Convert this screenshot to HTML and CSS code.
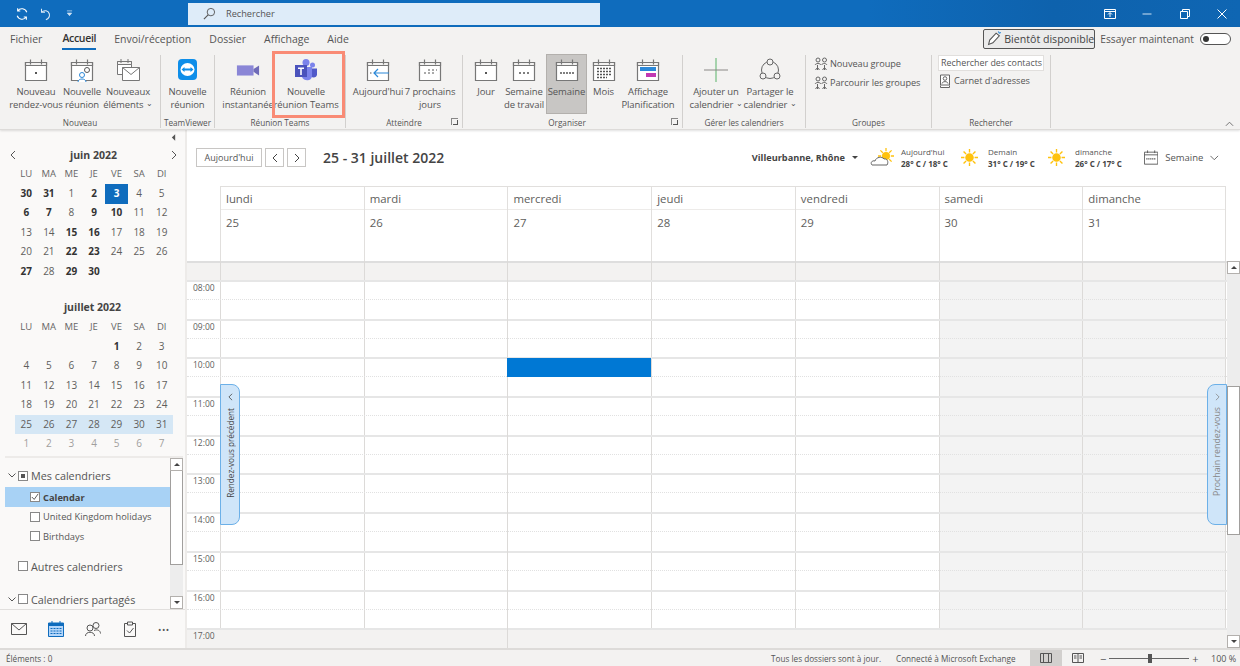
FILE: index.html
```html
<!doctype html>
<html lang="fr">
<head>
    <title>Calendrier - Outlook</title>
    <meta charset="utf-8">
    <link rel="stylesheet" href="styles.css">
</head>
<body>
    <svg class="defs" width="0" height="0">
      <symbol id="cal" viewBox="0 0 24 24">
        <path d="M1.5 4.5h21v18h-21z" fill="#fff" stroke="#777" stroke-width="1.2"/>
        <path d="M1.5 4.5h21v3h-21z" fill="#f3f2f1" stroke="#777" stroke-width="1.2"/>
        <path d="M6.5 1.5v5M17.5 1.5v5" stroke="#777" stroke-width="1.2"/>
      </symbol>
      <symbol id="people" viewBox="0 0 14 14">
        <g fill="none" stroke="#666" stroke-width="1">
          <circle cx="4" cy="3" r="2"/><circle cx="10.5" cy="3" r="2"/>
          <path d="M1 8c1-2 5-2 6 0M7.5 8c1-2 4.5-2 5.5 0M3.5 8v5M10.5 8v5M3.5 10.5l-2 2.5M3.5 10.5l2 2.5M10.5 10.5l-2 2.5M10.5 10.5l2 2.5"/>
        </g>
      </symbol>
      <symbol id="sun" viewBox="0 0 20 20">
        <circle cx="10" cy="10" r="5" fill="#ffc20e"/>
        <path d="M10 0v4M10 16v4M0 10h4M16 10h4M3 3l3 3M14 14l3 3M17 3l-3 3M6 14l-3 3" stroke="#ffc20e" stroke-width="1.6"/>
      </symbol>
    </svg>

    <header class="titlebar">
      <div class="qat">
        <svg class="qat-icon" viewBox="0 0 16 16"><path d="M13.5 6A6 6 0 0 0 3 4.5M2.5 10A6 6 0 0 0 13 11.5M3 1.5v3h3M13 14.5v-3h-3" fill="none" stroke="#fff" stroke-width="1.2"/></svg>
        <svg class="qat-icon" viewBox="0 0 16 16"><path d="M4 2v4h4M4 6c3-3 8-2 9 2 .6 3-1.5 5.5-4 6.5" fill="none" stroke="#dbe9f6" stroke-width="1.2"/></svg>
        <svg class="qat-caret" viewBox="0 0 8 8"><path d="M1 1h6M1.5 3.5L4 6.5l2.5-3z" fill="#cfe2f3" stroke="#cfe2f3" stroke-width=".8"/></svg>
      </div>
      <div class="search">
        <svg class="search-icon" viewBox="0 0 14 14"><circle cx="8.5" cy="5.5" r="4" fill="none" stroke="#555" stroke-width="1"/><path d="M5.5 8.5L1 13" stroke="#555" stroke-width="1.2"/></svg>
        <span>Rechercher</span>
      </div>
      <div class="win-btns">
        <svg class="win-icon" viewBox="0 0 12 12"><path d="M.5 1.5h11v9H.5zM.5 3.5h11M6 9V5M4 6.5L6 4.5l2 2" fill="none" stroke="#fff" stroke-width="1"/></svg>
        <svg class="win-icon" viewBox="0 0 12 12"><path d="M1.5 6h9" stroke="#cfe2f3" stroke-width="1"/></svg>
        <svg class="win-icon" viewBox="0 0 12 12"><path d="M1.5 3.5h7v7h-7zM3.5 3.5v-2h7v7h-2" fill="none" stroke="#fff" stroke-width="1"/></svg>
        <svg class="win-icon" viewBox="0 0 12 12"><path d="M1.5 1.5l9 9M10.5 1.5l-9 9" stroke="#fff" stroke-width="1"/></svg>
      </div>
    </header>

    <section class="ribbon">
      <div class="tabs">
        <nav class="tab-list">
          <span>Fichier</span>
          <span class="tab-active">Accueil</span>
          <span>Envoi/réception</span>
          <span>Dossier</span>
          <span>Affichage</span>
          <span>Aide</span>
        </nav>
        <div class="try">
          <div class="soon">
            <svg class="soon-icon" viewBox="0 0 14 14"><path d="M1.5 12.5l1-4 6-6.5 3 2.5-6 6.5z" fill="#fff" stroke="#555" stroke-width="1"/><path d="M10.5.5l1 1.5 1.5-.5" fill="none" stroke="#2b88d8" stroke-width="1"/></svg>
            <span>Bientôt disponible</span>
          </div>
          <span>Essayer maintenant</span>
          <span class="toggle"><i></i></span>
        </div>
      </div>

      <div class="groups">
        <div class="group g-new">
          <div class="items">
            <div class="item"><svg class="big-icon" viewBox="0 0 24 24"><use href="#cal"/><path d="M11 14h2v2h-2z" fill="#555"/></svg><span>Nouveau<br>rendez-vous</span></div>
            <div class="item"><svg class="big-icon" viewBox="0 0 24 24"><use href="#cal"/><circle cx="17" cy="12" r="2.5" fill="#fff" stroke="#555"/><circle cx="12" cy="17" r="2.5" fill="#fff" stroke="#2b88d8"/><path d="M8 24c0-4 8-4 8 0" fill="#fff" stroke="#2b88d8"/></svg><span>Nouvelle<br>réunion</span></div>
            <div class="item"><svg class="big-icon" viewBox="0 0 24 24"><path d="M1.5 3.5h14v13h-14z" fill="#fff" stroke="#777"/><path d="M1.5 3.5h14v3h-14zM5 1v4M12 1v4" fill="#f3f2f1" stroke="#777"/><path d="M6.5 9.5h17v13h-17z" fill="#fff" stroke="#777"/><path d="M6.5 9.5l8.5 7 8.5-7" fill="none" stroke="#777"/></svg><span>Nouveaux<br>éléments <b class="caret">⌄</b></span></div>
          </div>
          <div class="group-name">Nouveau</div>
        </div>

        <div class="group g-tv">
          <div class="items">
            <div class="item"><svg class="big-icon" viewBox="0 0 24 24"><rect x="2" y="1" width="19" height="21" rx="4" fill="#0e8ee9"/><ellipse cx="11.5" cy="11.5" rx="7" ry="6.5" fill="#fff"/><path d="M5.5 11.5l3-2.5v1.5h6V9l3 2.5-3 2.5v-1.5h-6V14z" fill="#0e8ee9"/></svg><span>Nouvelle<br>réunion</span></div>
          </div>
          <div class="group-name">TeamViewer</div>
        </div>

        <div class="group g-teams">
          <div class="items">
            <div class="item"><svg class="big-icon" viewBox="0 0 26 24"><path d="M1 7h18v11H1z" fill="#8a86d6"/><path d="M19 11l6-4v11l-6-4z" fill="#6f6bb8"/></svg><span>Réunion<br>instantanée</span></div>
            <div class="item"><svg class="big-icon" viewBox="0 0 24 24"><circle cx="18.5" cy="7" r="2.5" fill="#7b83eb"/><path d="M15 10.5h8v6c0 3-4 4-6 2z" fill="#5059c9"/><circle cx="12" cy="4.5" r="3.5" fill="#7b83eb"/><path d="M7 9h11v9c0 5-8 6-10 1z" fill="#7b83eb"/><path d="M1 7h12v12H1z" fill="#4b53bc"/><path d="M4 9.5h6V11H7.8v6H6.2v-6H4z" fill="#fff"/></svg><span>Nouvelle<br>réunion Teams</span></div>
          </div>
          <div class="group-name">Réunion Teams</div>
          <div class="highlight"></div>
        </div>

        <div class="group g-goto">
          <div class="items">
            <div class="item"><svg class="big-icon" viewBox="0 0 24 24"><use href="#cal"/><path d="M23 15H8M12 11l-4 4 4 4" fill="none" stroke="#2b88d8" stroke-width="1.2"/><path d="M4 15h1.5" stroke="#555"/></svg><span>Aujourd'hui</span></div>
            <div class="item"><svg class="big-icon" viewBox="0 0 24 24"><use href="#cal"/><path d="M6 15h2M10 15h2M14 15h2M10 12h2M14 12h2M18 12h1" stroke="#555"/></svg><span>7 prochains<br>jours</span></div>
          </div>
          <div class="group-name">Atteindre<i class="launcher"></i></div>
        </div>

        <div class="group g-arrange">
          <div class="items">
            <div class="item"><svg class="big-icon" viewBox="0 0 24 24"><use href="#cal"/><path d="M11 14h2v2h-2z" fill="#555"/></svg><span>Jour</span></div>
            <div class="item"><svg class="big-icon" viewBox="0 0 24 24"><use href="#cal"/><path d="M7 15h2M11 15h2M15 15h2" stroke="#555" stroke-width="1.5"/></svg><span>Semaine<br>de travail</span></div>
            <div class="item item-active"><svg class="big-icon" viewBox="0 0 24 24"><use href="#cal"/><path d="M5 15h14" stroke="#555" stroke-width="1.5" stroke-dasharray="2 1"/></svg><span>Semaine</span></div>
            <div class="item"><svg class="big-icon" viewBox="0 0 24 24"><use href="#cal"/><path d="M5 10.5h14M5 13.5h14M5 16.5h14M5 19.5h10" stroke="#555" stroke-width="1.5" stroke-dasharray="2 1"/></svg><span>Mois</span></div>
            <div class="item"><svg class="big-icon" viewBox="0 0 24 24"><use href="#cal"/><path d="M4 9h16v4H4z" fill="#2b88d8"/><path d="M10 15h10v4H10z" fill="#c239b3"/></svg><span>Affichage<br>Planification</span></div>
          </div>
          <div class="group-name group-name-off">Organiser<i class="launcher"></i></div>
        </div>

        <div class="group g-manage">
          <div class="items">
            <div class="item"><svg class="big-icon" viewBox="0 0 24 24"><path d="M12 0v24" stroke="#58b368" stroke-width="1"/><path d="M0 12h24" stroke="#8a8886" stroke-width="1"/></svg><span>Ajouter un<br>calendrier <b class="caret">⌄</b></span></div>
            <div class="item"><svg class="big-icon" viewBox="0 0 24 24"><circle cx="12" cy="12" r="8.5" fill="none" stroke="#666"/><circle cx="12" cy="4" r="3" fill="#f3f2f1" stroke="#666"/><circle cx="5" cy="18" r="3" fill="#f3f2f1" stroke="#666"/><circle cx="19" cy="18" r="3" fill="#f3f2f1" stroke="#666"/></svg><span>Partager le<br>calendrier <b class="caret">⌄</b></span></div>
          </div>
          <div class="group-name">Gérer les calendriers</div>
        </div>

        <div class="group g-groups">
          <div class="lines">
            <div class="line"><svg class="small-icon" viewBox="0 0 14 14"><use href="#people"/></svg><span>Nouveau groupe</span></div>
            <div class="line"><svg class="small-icon" viewBox="0 0 14 14"><use href="#people"/></svg><span>Parcourir les groupes</span></div>
          </div>
          <div class="group-name">Groupes</div>
        </div>

        <div class="group g-find">
          <div class="lines">
            <div class="contact-box">Rechercher des contacts</div>
            <div class="line"><svg class="small-icon" viewBox="0 0 14 14"><path d="M2.5 1h9v10h-9zM2.5 11.5v2h9v-2" fill="#fff" stroke="#666"/><circle cx="7" cy="4.5" r="1.8" fill="none" stroke="#666"/><path d="M4 9.5c.5-2.500 5.500-2.500 6 0" fill="none" stroke="#666"/></svg><span>Carnet d'adresses</span></div>
          </div>
          <div class="group-name">Rechercher</div>
        </div>

        <svg class="collapse" viewBox="0 0 10 6"><path d="M1 5l4-4 4 4" fill="none" stroke="#666"/></svg>
      </div>
    </section>

    <main class="main">
      <aside class="nav">
        <div class="nav-collapse"><svg class="pane-arrow" viewBox="0 0 6 8"><path d="M5 0L1 4l4 4z" fill="#555"/></svg></div>

        <div class="month-head">
          <svg class="month-arrow" viewBox="0 0 6 10"><path d="M5 1L1 5l4 4" fill="none" stroke="#555"/></svg>
          <span>juin 2022</span>
          <svg class="month-arrow" viewBox="0 0 6 10"><path d="M1 1l4 4-4 4" fill="none" stroke="#555"/></svg>
        </div>
        <div class="month">
          <span class="wd">LU</span><span class="wd">MA</span><span class="wd">ME</span><span class="wd">JE</span><span class="wd">VE</span><span class="wd">SA</span><span class="wd">DI</span>
          <b>30</b><b>31</b><span>1</span><b>2</b><b class="today">3</b><span>4</span><span>5</span>
          <b>6</b><b>7</b><span>8</span><b>9</b><b>10</b><span>11</span><span>12</span>
          <span>13</span><span>14</span><b>15</b><b>16</b><span>17</span><span>18</span><span>19</span>
          <span>20</span><span>21</span><b>22</b><b>23</b><span>24</span><span>25</span><span>26</span>
          <b>27</b><span>28</span><b>29</b><b>30</b>
        </div>

        <div class="month-head month-head-2"><span>juillet 2022</span></div>
        <div class="month">
          <span class="wd">LU</span><span class="wd">MA</span><span class="wd">ME</span><span class="wd">JE</span><span class="wd">VE</span><span class="wd">SA</span><span class="wd">DI</span>
          <span></span><span></span><span></span><span></span><b>1</b><span>2</span><span>3</span>
          <span>4</span><span>5</span><span>6</span><span>7</span><span>8</span><span>9</span><span>10</span>
          <span>11</span><span>12</span><span>13</span><span>14</span><span>15</span><span>16</span><span>17</span>
          <span>18</span><span>19</span><span>20</span><span>21</span><span>22</span><span>23</span><span>24</span>
          <span class="sel">25</span><span class="sel">26</span><span class="sel">27</span><span class="sel">28</span><span class="sel">29</span><span class="sel">30</span><span class="sel">31</span>
          <span class="other">1</span><span class="other">2</span><span class="other">3</span><span class="other">4</span><span class="other">5</span><span class="other">6</span><span class="other">7</span>
        </div>

        <div class="folders">
          <div class="tree">
            <div class="tree-head"><svg class="chev" viewBox="0 0 8 5"><path d="M.5.5L4 4 7.5.5" fill="none" stroke="#555"/></svg><i class="check check-mixed"></i><span>Mes calendriers</span></div>
            <div class="tree-row tree-row-sel"><i class="check"><svg viewBox="0 0 10 10"><path d="M1 5l3 3 5-7" fill="none" stroke="#333"/></svg></i><b>Calendar</b></div>
            <div class="tree-row"><i class="check"></i><span>United Kingdom holidays</span></div>
            <div class="tree-row"><i class="check"></i><span>Birthdays</span></div>
            <div class="tree-head tree-head-gap"><i class="check check-indent"></i><span>Autres calendriers</span></div>
            <div class="tree-head tree-head-gap2"><svg class="chev" viewBox="0 0 8 5"><path d="M.5.5L4 4 7.5.5" fill="none" stroke="#555"/></svg><i class="check"></i><span>Calendriers partagés</span></div>
          </div>
          <div class="tree-scroll">
            <span class="tree-btn"><i class="tri-up"></i></span>
            <span class="tree-thumb"></span>
            <span class="tree-track"></span>
            <span class="tree-btn"><i class="tri-down"></i></span>
          </div>
        </div>

        <div class="modules">
          <svg class="module" viewBox="0 0 16 12"><path d="M.5.5h15v11H.5z" fill="none" stroke="#555"/><path d="M.5.5L8 7l7.5-6.5" fill="none" stroke="#555"/></svg>
          <svg class="module" viewBox="0 0 16 16"><path d="M.5 2h15v13.5H.5z" fill="#b4d6fa" stroke="#0f6cbd"/><path d="M.5 2h15v3H.5z" fill="#0f6cbd"/><path d="M4 0v3M12 0v3" stroke="#0f6cbd"/><path d="M2.5 7.5h11M2.5 10h11M2.5 12.5h11" stroke="#0f6cbd" stroke-dasharray="2 1"/></svg>
          <svg class="module" viewBox="0 0 16 16"><circle cx="11" cy="4.5" r="3" fill="none" stroke="#555"/><circle cx="5" cy="7" r="3" fill="none" stroke="#555"/><path d="M.5 15c0-5 9-5 9 0M9 9.5c3-1.500 6.500 0 6.500 3" fill="none" stroke="#555"/></svg>
          <svg class="module" viewBox="0 0 16 16"><path d="M2.5 2.5h11v13h-11z" fill="none" stroke="#555"/><path d="M5.500 1h5v3h-5z" fill="#faf9f8" stroke="#555"/><path d="M5 9.5l2.500 2.500 4-5" fill="none" stroke="#555"/></svg>
          <span class="more">•••</span>
        </div>
      </aside>

      <section class="cal">
        <div class="cal-top">
          <button class="btn btn-today">Aujourd'hui</button>
          <button class="btn btn-arrow"><svg class="btn-icon" viewBox="0 0 6 10"><path d="M5 1L1 5l4 4" fill="none" stroke="#444"/></svg></button>
          <button class="btn btn-arrow"><svg class="btn-icon" viewBox="0 0 6 10"><path d="M1 1l4 4-4 4" fill="none" stroke="#444"/></svg></button>
          <h1 class="range">25 - 31 juillet 2022</h1>

          <div class="weather">
            <b class="city">Villeurbanne, Rhône</b>
            <i class="tri-down city-caret"></i>
            <div class="day-w day-w-first">
              <svg class="wx" viewBox="0 0 24 20"><use href="#sun" x="8" y="0" width="16" height="16"/><path d="M2 17c-2-2 0-5 3-4 1-4 7-5 9-2 3-1 5 3 3 6z" fill="#fff" stroke="#666"/></svg>
              <div class="wx-text"><span>Aujourd'hui</span><b>28° C / 18° C</b></div>
            </div>
            <div class="day-w">
              <svg class="wx wx-sun" viewBox="0 0 20 20"><use href="#sun"/></svg>
              <div class="wx-text"><span>Demain</span><b>31° C / 19° C</b></div>
            </div>
            <div class="day-w">
              <svg class="wx wx-sun" viewBox="0 0 20 20"><use href="#sun"/></svg>
              <div class="wx-text"><span>dimanche</span><b>26° C / 17° C</b></div>
            </div>
            <div class="view-pick">
              <svg class="view-icon" viewBox="0 0 16 16"><path d="M.5 2h15v13.5H.5zM.5 5h15M4 0v3M12 0v3" fill="none" stroke="#555"/><path d="M2.5 9.5h11" stroke="#555" stroke-width="1.5" stroke-dasharray="1.5 .7"/></svg>
              <span>Semaine</span>
              <svg class="view-chev" viewBox="0 0 10 6"><path d="M.5.5L5 5 9.500.5" fill="none" stroke="#555"/></svg>
            </div>
          </div>
        </div>

        <div class="day-head">
          <div class="head-col"><span class="head-name">lundi</span><span class="head-num">25</span></div>
          <div class="head-col"><span class="head-name">mardi</span><span class="head-num">26</span></div>
          <div class="head-col"><span class="head-name">mercredi</span><span class="head-num">27</span></div>
          <div class="head-col"><span class="head-name">jeudi</span><span class="head-num">28</span></div>
          <div class="head-col"><span class="head-name">vendredi</span><span class="head-num">29</span></div>
          <div class="head-col"><span class="head-name">samedi</span><span class="head-num">30</span></div>
          <div class="head-col"><span class="head-name">dimanche</span><span class="head-num">31</span></div>
        </div>

        <div class="schedule">
          <div class="grid">
            <div class="hours">
              <div class="band"></div>
              <div class="hour">08:00</div>
              <div class="hour">09:00</div>
              <div class="hour">10:00</div>
              <div class="hour">11:00</div>
              <div class="hour">12:00</div>
              <div class="hour">13:00</div>
              <div class="hour">14:00</div>
              <div class="hour">15:00</div>
              <div class="hour">16:00</div>
              <div class="hour hour-last">17:00</div>
            </div>
            <div class="cols">
              <div class="col"></div>
              <div class="col"></div>
              <div class="col col-event"><div class="event"></div></div>
              <div class="col"></div>
              <div class="col"></div>
              <div class="col col-we"></div>
              <div class="col col-we"></div>
            </div>
          </div>
          <div class="vscroll">
            <span class="tree-btn"><i class="tri-up"></i></span>
            <span class="v-gap"></span>
            <span class="v-thumb"></span>
            <span class="v-gap v-gap-end"></span>
            <span class="tree-btn"><i class="tri-down"></i></span>
          </div>
          <div class="peek peek-prev">
            <svg class="peek-arrow" viewBox="0 0 6 10"><path d="M5 1L1 5l4 4" fill="none" stroke="#444"/></svg>
            <span>Rendez-vous précédent</span>
          </div>
          <div class="peek peek-next">
            <svg class="peek-arrow" viewBox="0 0 6 10"><path d="M1 1l4 4-4 4" fill="none" stroke="#888"/></svg>
            <span>Prochain rendez-vous</span>
          </div>
        </div>
      </section>
    </main>

    <footer class="status">
      <span class="status-left">Éléments : 0</span>
      <span class="status-sync">Tous les dossiers sont à jour.</span>
      <span class="status-conn">Connecté à Microsoft Exchange</span>
      <span class="view-btn view-btn-on"><svg class="status-icon" viewBox="0 0 12 12"><path d="M.5 1.5h11v9H.5zM3.5 1.5v9M8.5 1.5v9" fill="none" stroke="#555"/></svg></span>
      <span class="view-btn"><svg class="status-icon" viewBox="0 0 12 12"><path d="M.5 1.5h11v9H.5zM6 1.5v9M2 4h2.5M2 6h2.5M7.5 4H10M7.5 6H10" fill="none" stroke="#555"/></svg></span>
      <div class="zoom">
        <span>−</span>
        <div class="slider"><i></i></div>
        <span>+</span>
      </div>
      <span class="status-pct">100 %</span>
    </footer>
</body>
</html>
```

FILE: styles.css
```css
* {
  margin: 0;
  padding: 0;
  box-sizing: border-box;
}
body {
  width: 1240px;
  height: 666px;
  overflow: hidden;
  display: flex;
  flex-direction: column;
  font-family: "Open Sans", "Noto Sans", sans-serif;
  font-size: 10px;
  color: #555;
  background-color: #fff;
}
.defs {
  position: absolute;
}

/* title bar */
.titlebar {
  height: 27px;
  flex: none;
  display: flex;
  align-items: center;
  background: linear-gradient(90deg, #0f6cbd 0, #0f6cbd 70%, #0e62ad 85%, #0f66b3 100%);
}
.qat {
  width: 188px;
  display: flex;
  align-items: center;
  padding-left: 15px;
  gap: 9px;
}
.qat-icon {
  width: 14px;
  height: 14px;
}
.qat-caret {
  width: 7px;
  height: 7px;
  margin-left: 5px;
}
.search {
  width: 412px;
  height: 22px;
  display: flex;
  align-items: center;
  padding-left: 15px;
  gap: 10px;
  background-color: #deecf9;
  font-size: 9.2px;
  color: #555;
}
.search-icon {
  width: 13px;
  height: 13px;
}
.win-btns {
  margin-left: auto;
  display: flex;
  gap: 25.5px;
  padding-right: 12px;
}
.win-icon {
  width: 12px;
  height: 12px;
}

/* ribbon */
.ribbon {
  height: 103px;
  flex: none;
  background-color: #f3f2f1;
  border-bottom: 1px solid #dddbd9;
  box-shadow: 0 1px 2px rgba(0, 0, 0, 0.12);
  z-index: 2;
}
.tabs {
  height: 25px;
  display: flex;
  align-items: center;
  justify-content: space-between;
  padding: 0 9px 2px 10px;
  font-size: 10.5px;
}
.tab-list {
  display: flex;
  gap: 18px;
  height: 100%;
  align-items: center;
}
.tab-active {
  margin-left: 2px;
  letter-spacing: -0.3px;
  font-weight: 600;
  color: #333;
  height: 23px;
  line-height: 23px;
  border-bottom: 2px solid #0f6cbd;
}
.try {
  display: flex;
  align-items: center;
  gap: 5px;
  font-size: 10.2px;
}
.soon {
  width: 112px;
  height: 20px;
  display: flex;
  align-items: center;
  gap: 2px;
  padding-left: 3px;
  border: 1px solid #555;
  border-radius: 2px;
  background-color: #ebebeb;
  white-space: nowrap;
  font-size: 10.6px;
  color: #444;
}
.soon-icon {
  width: 15px;
  height: 15px;
}
.toggle {
  width: 31px;
  height: 12px;
  margin-left: 1px;
  padding: 2px;
  border: 1px solid #555;
  border-radius: 6px;
  background-color: #fff;
}
.toggle i {
  display: block;
  width: 6px;
  height: 6px;
  border-radius: 50%;
  background-color: #333;
}
.groups {
  height: 77px;
  display: flex;
  position: relative;
}
.group {
  position: relative;
  display: flex;
  flex-direction: column;
  padding-top: 2px;
}
.group::after {
  content: "";
  position: absolute;
  right: 0;
  top: 3px;
  bottom: 1px;
  width: 1px;
  background-color: #d2d0ce;
}
.items {
  flex: 1;
  display: grid;
  align-items: start;
}
.item {
  height: 60px;
  padding-top: 4px;
  display: flex;
  flex-direction: column;
  align-items: center;
  text-align: center;
  white-space: nowrap;
  line-height: 13px;
  font-size: 9.5px;
  letter-spacing: -0.1px;
}
.item-active {
  background-color: #c8c6c4;
  border: 1px solid #b3b0ad;
  padding-top: 3px;
}
.big-icon {
  width: 24px;
  height: 24px;
  margin-bottom: 3px;
  flex: none;
  overflow: visible;
}
.caret {
  font-weight: 400;
  font-size: 8px;
  line-height: 8px;
  vertical-align: 2px;
}
.group-name {
  position: relative;
  height: 14px;
  line-height: 16px;
  padding-right: 1px;
  text-align: center;
  font-size: 8.2px;
  white-space: nowrap;
}
.group-name-off {
  padding-right: 12px;
}
.launcher {
  position: absolute;
  right: 5px;
  top: 3px;
  width: 7px;
  height: 7px;
  border-left: 1px solid #888;
  border-top: 1px solid #888;
}
.launcher::after {
  content: "";
  position: absolute;
  right: 0;
  bottom: 0;
  width: 4px;
  height: 4px;
  border-right: 1px solid #555;
  border-bottom: 1px solid #555;
}
.g-new { width: 161px; }
.g-new .items { padding-left: 9px; grid-template-columns: 54px 38px 54px; }
.g-tv { width: 54px; }
.g-tv .items { grid-template-columns: 53px; }
.g-teams { width: 131px; }
.g-teams .items { padding-left: 7px; grid-template-columns: 52px 64px; }
.g-goto { width: 117px; }
.g-goto .items { padding-left: 6px; grid-template-columns: 52px 52px; }
.g-arrange { width: 220px; }
.g-arrange .items { padding-left: 7px; grid-template-columns: 32px 44px 41px 33px 56px; }
.g-manage { width: 123px; }
.g-manage .items { padding-left: 4px; grid-template-columns: 58px 50px; }
.g-groups { width: 126px; }
.g-find { width: 119px; }
.highlight {
  position: absolute;
  left: 57px;
  top: -1px;
  width: 73px;
  height: 67px;
  border: 3px solid #f98b75;
}
.lines {
  flex: 1;
}
.g-groups .lines {
  padding-left: 8px;
}
.g-find .lines {
  padding: 1px 0 0 6px;
}
.line {
  height: 19px;
  display: flex;
  align-items: center;
  gap: 2px;
  font-size: 9.2px;
  letter-spacing: -0.05px;
  white-space: nowrap;
}
.small-icon {
  width: 14px;
  height: 14px;
  flex: none;
}
.contact-box {
  width: 106px;
  height: 16px;
  padding-left: 2px;
  line-height: 14px;
  font-size: 8.9px;
  background-color: #fff;
  border: 1px solid #e1dfdd;
  white-space: nowrap;
}
.collapse {
  position: absolute;
  right: 6px;
  bottom: 2px;
  width: 9px;
  height: 6px;
}

/* main */
.main {
  flex: 1;
  min-height: 0;
  display: flex;
}
.nav {
  width: 187px;
  flex: none;
  display: flex;
  flex-direction: column;
  background-color: #faf9f8;
  border-right: 2px solid #edebe9;
}
.nav-collapse {
  height: 18px;
  padding: 4px 9px 0 0;
  display: flex;
  justify-content: flex-end;
}
.pane-arrow {
  width: 5px;
  height: 7px;
}
.month-head {
  height: 15px;
  margin-top: -1px;
  padding: 0 8px 0 10px;
  display: flex;
  align-items: center;
  justify-content: space-between;
  font-size: 10.5px;
  font-weight: 700;
  color: #444;
}
.month-head-2 {
  justify-content: center;
  margin-top: 19px;
  padding: 0 10px;
}
.month-arrow {
  width: 6px;
  height: 10px;
}
.month {
  width: 158px;
  margin-left: 15px;
  padding-top: 2px;
  display: grid;
  grid-template-columns: repeat(7, 1fr);
  grid-template-rows: 20px;
  grid-auto-rows: 19.4px;
  font-size: 10px;
  line-height: 19.4px;
  text-align: center;
  color: #605e5c;
}
.month b {
  color: #333;
}
.month .wd {
  font-size: 9.5px;
  color: #666;
}
.month .today {
  height: 20px;
  background-color: #0f6cbd;
  color: #fff;
}
.month .sel {
  background-color: #d5e7f5;
}
.month .other {
  color: #a19f9d;
}
.folders {
  height: 153px;
  margin: 3px 2px 0 5px;
  display: flex;
  border-top: 2px solid #edebe9;
}
.tree {
  width: 165px;
  padding-top: 8px;
  white-space: nowrap;
}
.tree-head {
  height: 19px;
  margin-bottom: 2px;
  display: flex;
  align-items: center;
  font-size: 10.8px;
}
.tree-head-gap {
  margin-top: 11px;
  margin-bottom: 0;
}
.tree-head-gap2 {
  margin-top: 14px;
}
.chev {
  width: 8px;
  height: 5px;
  margin: 0 2px 0 3px;
}
.check {
  width: 10px;
  height: 10px;
  flex: none;
  margin-right: 3px;
  border: 1px solid #888;
  background-color: #fff;
  display: inline-block;
}
.check svg {
  display: block;
}
.check-mixed {
  background: linear-gradient(#555, #555) center / 4px 4px no-repeat #fff;
}
.check-indent {
  margin-left: 13px;
}
.tree-row {
  height: 19.5px;
  display: flex;
  align-items: center;
  padding-left: 25px;
  font-size: 9.3px;
}
.tree-row-sel {
  background-color: #a8d2f5;
  color: #444;
}
.tree-scroll,
.vscroll {
  width: 13px;
  flex: none;
  display: flex;
  flex-direction: column;
  background-color: #ededed;
}
.tree-btn {
  height: 13px;
  flex: none;
  display: flex;
  align-items: center;
  justify-content: center;
  background-color: #fff;
  border: 1px solid #b3b0ad;
}
.tri-up,
.tri-down {
  display: block;
  width: 0;
  height: 0;
  border-left: 3px solid transparent;
  border-right: 3px solid transparent;
}
.tri-up {
  border-bottom: 3px solid #444;
}
.tri-down {
  border-top: 3px solid #444;
}
.tree-thumb {
  height: 94px;
  background-color: #fff;
  border: 1px solid #a19f9d;
  border-top: none;
}
.tree-track {
  flex: 1;
}
.modules {
  flex: 1;
  display: flex;
  align-items: center;
  padding-left: 11px;
  gap: 21px;
  border-top: 1px solid #e1dfdd;
}
.module {
  width: 16px;
  height: 16px;
  flex: none;
}
.more {
  margin-left: -1px;
  font-size: 9px;
  letter-spacing: 0.5px;
}

/* calendar */
.cal {
  flex: 1;
  min-width: 0;
  display: flex;
  flex-direction: column;
}
.cal-top {
  height: 56px;
  flex: none;
  padding: 0 21px 1px 9px;
  display: flex;
  align-items: center;
  gap: 3px;
}
.btn {
  height: 19px;
  font-family: inherit;
  font-size: 9px;
  color: #555;
  background-color: #fff;
  border: 1px solid #c8c6c4;
}
.btn-today {
  width: 66px;
}
.btn-arrow {
  width: 19px;
}
.btn-icon {
  width: 6px;
  height: 10px;
  display: block;
  margin: auto;
}
.range {
  margin-left: 14px;
  font-size: 14px;
  font-weight: 600;
  color: #444;
}
.weather {
  margin-left: auto;
  display: flex;
  align-items: center;
}
.city {
  font-size: 9.2px;
  color: #444;
}
.city-caret {
  margin-left: 7px;
}
.day-w {
  width: 87px;
  display: flex;
  align-items: center;
  gap: 10px;
}
.day-w-first {
  margin-left: 12px;
  width: 91px;
  gap: 7px;
}
.wx {
  width: 24px;
  height: 20px;
  flex: none;
}
.wx-sun {
  width: 17px;
  height: 17px;
}
.wx-text {
  display: flex;
  flex-direction: column;
  font-size: 8px;
  line-height: 11.5px;
  white-space: nowrap;
}
.wx-text b {
  color: #444;
  font-size: 8px;
}
.view-pick {
  width: 75px;
  margin-left: 9px;
  display: flex;
  align-items: center;
  gap: 7px;
  font-size: 9.5px;
}
.view-icon {
  width: 15px;
  height: 15px;
}
.view-chev {
  width: 9px;
  height: 6px;
  margin-left: auto;
}
.day-head {
  height: 75px;
  flex: none;
  margin: 0 14px 0 33px;
  display: grid;
  grid-template-columns: repeat(7, 1fr);
  border-top: 1px solid #e1dfdd;
}
.head-col {
  display: flex;
  flex-direction: column;
  border-left: 1px solid #e1dfdd;
  font-size: 11.4px;
  color: #605e5c;
}
.head-col:last-child {
  border-right: 1px solid #e1dfdd;
}
.head-name {
  height: 23px;
  line-height: 23px;
  padding-left: 5px;
  border-bottom: 1px solid #edebe9;
}
.head-num {
  padding: 5px 0 0 5px;
  line-height: 15px;
}
.schedule {
  flex: 1;
  min-height: 0;
  position: relative;
  display: flex;
}
.grid {
  flex: 1;
  min-width: 0;
  display: grid;
}
.hours,
.cols {
  grid-area: 1 / 1;
}
.band {
  height: 19px;
  background-color: #f3f2f1;
  border-top: 2px solid #dedede;
}
.hour {
  position: relative;
  height: 38.7px;
  padding-left: 6px;
  line-height: 12px;
  font-size: 8.5px;
  color: #605e5c;
  border-top: 2px solid #e6e6e6;
}
.hour::after {
  content: "";
  position: absolute;
  left: 0;
  right: 0;
  top: 17px;
  border-top: 1px dotted #e1e1e1;
}
.hour-last {
  height: 19.7px;
  background-color: #f3f2f1;
}
.hour-last::after {
  display: none;
}
.cols {
  margin: 0 1px 0 33px;
  display: grid;
  grid-template-columns: repeat(7, 1fr);
}
.col {
  border-left: 1px solid #dcdad8;
}
.col:last-child {
  border-right: 1px solid #dcdad8;
}
.col-we {
  background: linear-gradient(transparent 19px, rgba(0, 0, 0, 0.047) 19px, rgba(0, 0, 0, 0.047) calc(100% - 20px), transparent calc(100% - 20px));
}
.col-event {
  position: relative;
}
.event {
  position: absolute;
  left: -1px;
  right: 0;
  top: 97px;
  height: 19px;
  background-color: #0078d4;
}
.v-gap {
  height: 112px;
}
.v-gap-end {
  height: auto;
  flex: 1;
}
.v-thumb {
  height: 149px;
  background-color: #fff;
  border: 1px solid #a19f9d;
}
.peek {
  position: absolute;
  top: 123px;
  width: 20px;
  height: 141px;
  padding-top: 8px;
  display: flex;
  flex-direction: column;
  align-items: center;
  gap: 7px;
  background-color: #cfe5f9;
  border: 1px solid #6cb0e8;
  font-size: 8.2px;
  white-space: nowrap;
}
.peek span {
  writing-mode: vertical-rl;
  transform: rotate(180deg);
}
.peek-prev {
  left: 33px;
  border-radius: 0 8px 8px 0;
  color: #444;
}
.peek-next {
  right: 13px;
  gap: 6px;
  border-radius: 8px 0 0 8px;
  color: #888;
  font-size: 8.8px;
}
.peek-arrow {
  width: 5px;
  height: 8px;
  flex: none;
}

/* status bar */
.status {
  height: 18px;
  flex: none;
  display: flex;
  align-items: center;
  padding-left: 6px;
  background-color: #f3f2f1;
  border-top: 2px solid #dddbd9;
  font-size: 8.2px;
  white-space: nowrap;
}
.status-left {
  width: 765px;
}
.status-sync {
  width: 125px;
}
.status-conn {
  width: 134px;
}
.view-btn {
  width: 32px;
  height: 16px;
  display: flex;
  align-items: center;
  justify-content: center;
}
.view-btn-on {
  background-color: #d2d0ce;
}
.status-icon {
  width: 12px;
  height: 12px;
}
.zoom {
  width: 104px;
  margin-left: 6px;
  display: flex;
  align-items: center;
  gap: 3px;
  font-size: 11px;
}
.slider {
  position: relative;
  width: 80px;
  height: 1px;
  background-color: #666;
}
.slider i {
  position: absolute;
  left: 39px;
  top: -4px;
  width: 4px;
  height: 9px;
  background-color: #555;
}
.status-pct {
  margin-left: 7px;
  font-size: 9px;
}
```
